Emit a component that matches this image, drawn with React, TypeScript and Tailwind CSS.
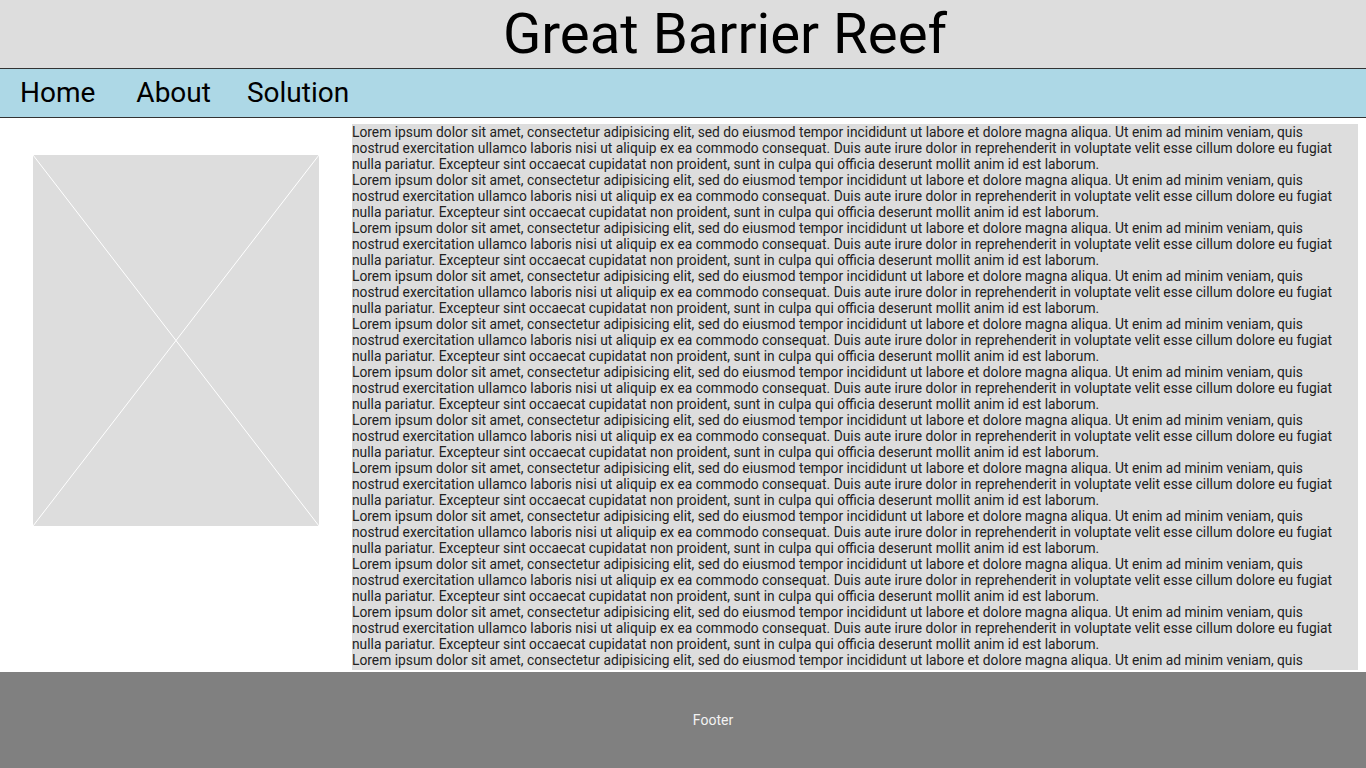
import React from 'react';

const LOREM =
  'Lorem ipsum dolor sit amet, consectetur adipisicing elit, sed do eiusmod tempor incididunt ut labore et dolore magna aliqua. Ut enim ad minim veniam, quis nostrud exercitation ullamco laboris nisi ut aliquip ex ea commodo consequat. Duis aute irure dolor in reprehenderit in voluptate velit esse cillum dolore eu fugiat nulla pariatur. Excepteur sint occaecat cupidatat non proident, sunt in culpa qui officia deserunt mollit anim id est laborum.';

// Header with the big title
function Header() {
  return (
    <header className="h-[69px] bg-[#dddddd] border-b border-[#333] flex items-center justify-center pl-[84px]">
      <h1 className="text-[56.3px] leading-none text-black">Great Barrier Reef</h1>
    </header>
  );
}

// Nav bar
function Nav() {
  return (
    <nav className="h-[49px] bg-[#add8e6] border-b border-[#333] flex items-center pl-[20px] text-[28px] leading-none text-black">
      <a className="cursor-pointer">Home</a>
      <a className="ml-[41px] cursor-pointer">About</a>
      <a className="ml-[36px] cursor-pointer">Solution</a>
    </nav>
  );
}

// Placeholder image with a cross
function ImagePlaceholder() {
  return (
    <div className="w-[286px] h-[371px] bg-[#dddddd]">
      <svg width="286" height="371" viewBox="0 0 286 371" className="block">
        <line x1="0" y1="0" x2="286" y2="371" stroke="#ffffff" strokeWidth="1" />
        <line x1="286" y1="0" x2="0" y2="371" stroke="#ffffff" strokeWidth="1" />
      </svg>
    </div>
  );
}

function Footer() {
  return (
    <footer className="h-[96px] bg-[#808080] flex items-center justify-center pl-[60px]">
      <p className="text-[14px] text-[#f2f2f2]">Footer</p>
    </footer>
  );
}

export default function App() {
  return (
    <div className="h-[768px] flex flex-col bg-white overflow-hidden" style={{ fontFamily: 'Roboto, sans-serif' }}>
      <Header />
      <Nav />
      <main className="h-[554px] flex">
        <div className="w-[352px] flex justify-center pt-[37px] pr-[1px]">
          <ImagePlaceholder />
        </div>
        <div className="w-[1006px] h-[546px] mt-[6px] pr-[20px] bg-[#dddddd] overflow-hidden text-[13.8px] leading-[16px] text-[#222]">
          {Array.from({ length: 12 }).map((_, i) => (
            <p key={i}>{LOREM}</p>
          ))}
        </div>
      </main>
      <Footer />
    </div>
  );
}
